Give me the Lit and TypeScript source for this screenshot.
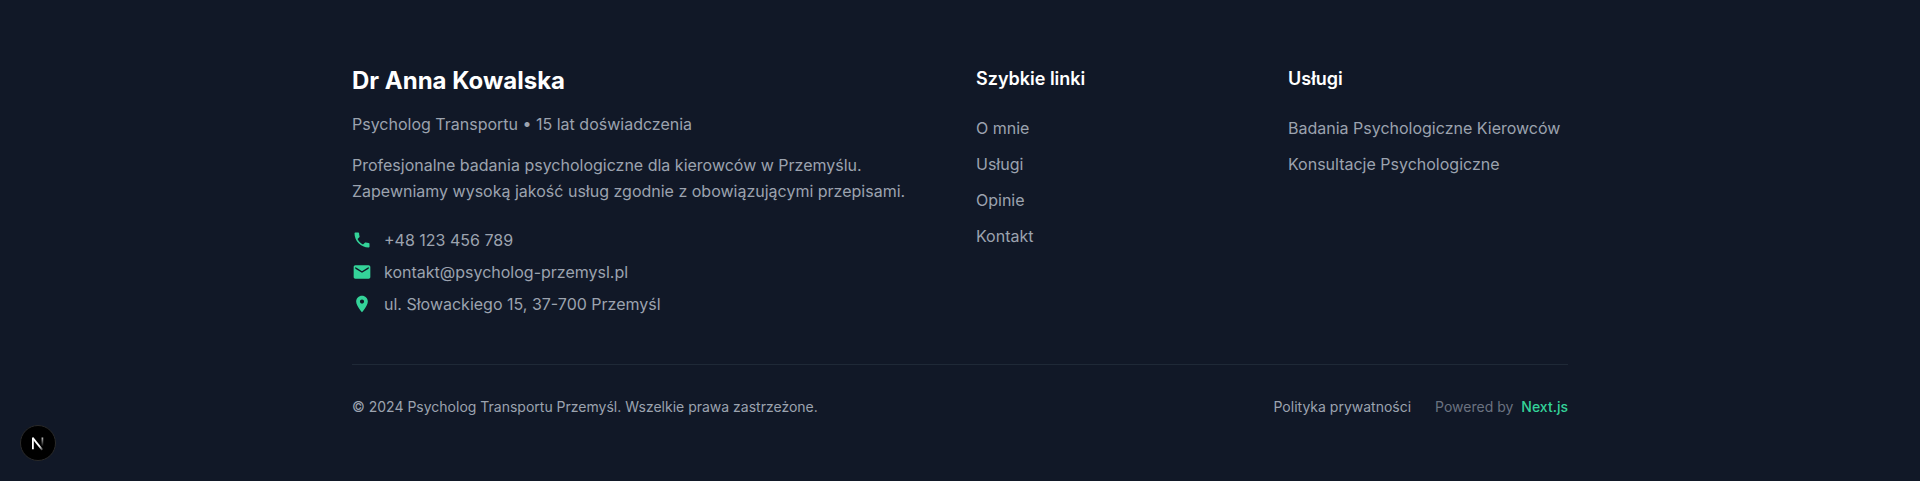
import { LitElement, html, css } from "lit";
import { customElement } from "lit/decorators.js";

const contacts = [
  { text: "+48 123 456 789", icon: "M6.62 10.79c1.44 2.83 3.76 5.14 6.59 6.59l2.2-2.2c.27-.27.67-.36 1.02-.24 1.12.37 2.33.57 3.57.57.55 0 1 .45 1 1V20c0 .55-.45 1-1 1-9.39 0-17-7.61-17-17 0-.55.45-1 1-1h3.5c.55 0 1 .45 1 1 0 1.25.2 2.45.57 3.57.11.35.03.74-.25 1.02l-2.2 2.2z" },
  { text: "kontakt@psycholog-przemysl.pl", icon: "M20 4H4c-1.1 0-1.99.9-1.99 2L2 18c0 1.1.9 2 2 2h16c1.1 0 2-.9 2-2V6c0-1.1-.9-2-2-2zm0 4l-8 5-8-5V6l8 5 8-5v2z" },
  { text: "ul. Słowackiego 15, 37-700 Przemyśl", icon: "M12 2C8.13 2 5 5.13 5 9c0 5.25 7 13 7 13s7-7.75 7-13c0-3.87-3.13-7-7-7zm0 9.5c-1.38 0-2.5-1.12-2.5-2.5s1.12-2.5 2.5-2.5 2.5 1.12 2.5 2.5-1.12 2.5-2.5 2.5z" },
];

const columns = [
  { title: "Szybkie linki", links: ["O mnie", "Usługi", "Opinie", "Kontakt"] },
  { title: "Usługi", links: ["Badania Psychologiczne Kierowców", "Konsultacje Psychologiczne"] },
];

@customElement("app-root")
export class AppRoot extends LitElement {
  static styles = css`
    :host { display: block; height: 481px; background: #111827; font-family: Inter, sans-serif; font-size: 16px; line-height: 24px; color: #9ca3af; }
    .container { width: 1216px; margin: 0 auto; padding-top: 64px; }
    .grid { display: grid; grid-template-columns: repeat(4, minmax(0, 1fr)); gap: 32px; margin-bottom: 48px; }
    .about { grid-column: span 2; }
    h3, h4, p, ul { margin: 0; padding: 0; list-style: none; }
    a { color: inherit; text-decoration: none; }
    .name { color: #fff; font-size: 24px; line-height: 32px; font-weight: 700; padding-top: 1px; margin-bottom: 15px; }
    .role { margin-bottom: 16px; }
    .lead { line-height: 26px; margin-bottom: 24px; }
    .contacts { display: grid; gap: 8px; }
    .contact { display: flex; align-items: center; gap: 12px; }
    .contact svg { width: 20px; height: 20px; fill: #34d399; }
    .title { color: #fff; font-size: 18px; line-height: 28px; font-weight: 600; padding-top: 1px; margin-bottom: 23px; }
    .links { display: grid; gap: 12px; }
    .bottom { display: flex; justify-content: space-between; border-top: 1px solid #1f2937; padding-top: 32px; font-size: 14px; line-height: 20px; }
    .legal { display: flex; gap: 24px; }
    .powered { display: flex; gap: 8px; color: #6b7280; }
    .next { color: #34d399; font-weight: 500; }
    .badge { position: fixed; left: 20px; bottom: 20px; width: 36px; height: 36px; }
    .badge svg { display: block; width: 36px; height: 36px; }
  `;

  render() {
    return html`
      <footer class="container">
        <div class="grid">
          <div class="about">
            <h3 class="name">Dr Anna Kowalska</h3>
            <p class="role">Psycholog Transportu • 15 lat doświadczenia</p>
            <p class="lead">Profesjonalne badania psychologiczne dla kierowców w Przemyślu.<br />Zapewniamy wysoką jakość usług zgodnie z obowiązującymi przepisami.</p>
            <div class="contacts">
              ${contacts.map((c) => html`<div class="contact"><svg viewBox="0 0 24 24"><path d=${c.icon}></path></svg><span>${c.text}</span></div>`)}
            </div>
          </div>
          ${columns.map((c) => html`<div>
            <h4 class="title">${c.title}</h4>
            <ul class="links">${c.links.map((l) => html`<li><a href="#">${l}</a></li>`)}</ul>
          </div>`)}
        </div>
        <div class="bottom">
          <p>© 2024 Psycholog Transportu Przemyśl. Wszelkie prawa zastrzeżone.</p>
          <div class="legal">
            <a href="#">Polityka prywatności</a>
            <div class="powered"><span>Powered by</span><span class="next">Next.js</span></div>
          </div>
        </div>
      </footer>
      <div class="badge">
        <svg viewBox="0 0 36 36" fill="none">
          <defs>
            <linearGradient id="diag" x1="18" y1="18" x2="23.2" y2="24.6" gradientUnits="userSpaceOnUse"><stop offset="0.4" stop-color="#fff"></stop><stop offset="1" stop-color="#fff" stop-opacity="0.2"></stop></linearGradient>
            <linearGradient id="stem" x1="22.4" y1="12.5" x2="22.4" y2="21.5" gradientUnits="userSpaceOnUse"><stop stop-color="#fff" stop-opacity="0.75"></stop><stop offset="1" stop-color="#fff" stop-opacity="0"></stop></linearGradient>
          </defs>
          <circle cx="18" cy="18" r="17.5" fill="#000" stroke="#2a2a2a"></circle>
          <path d="M12.9 24.2V12.5" stroke="#fff" stroke-width="1.8"></path>
          <path d="M12.9 13.1L22.3 24.9" stroke="url(#diag)" stroke-width="1.8"></path>
          <path d="M22.4 12.5V21" stroke="url(#stem)" stroke-width="1.7"></path>
        </svg>
      </div>
    `;
  }
}
